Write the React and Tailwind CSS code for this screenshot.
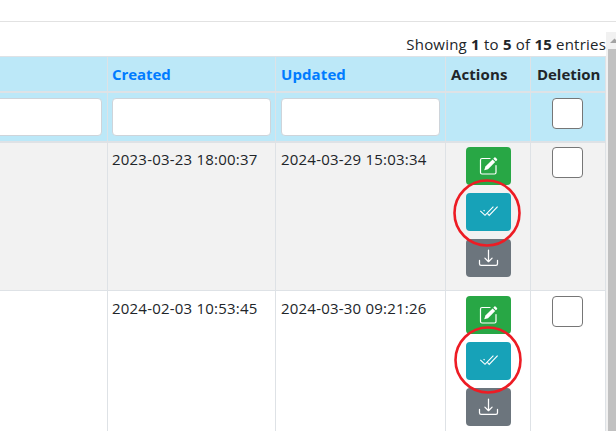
const cols = 'grid grid-cols-[107px_168px_170px_85px_76px]';
const cell = 'border-l border-[#dee2e6]';

function EditIcon() {
  return (
    <svg width="21" height="20" viewBox="0 0 21 20" fill="none">
      <path d="M12 2.5H4A1.5 1.5 0 0 0 2.5 4v12.5A1.5 1.5 0 0 0 4 18h12.5a1.5 1.5 0 0 0 1.5-1.5V9.5" stroke="white" strokeWidth="1.2" strokeLinecap="round" />
      <path d="M6.2 14.3 7.4 10.6 14.6 3.4 17.2 6 10 13.2z" fill="white" />
      <path d="M15.3 2.7 16.4 1.6a.8.8 0 0 1 1.1 0L19 3.1a.8.8 0 0 1 0 1.1L17.9 5.3z" fill="white" />
    </svg>
  );
}

function CheckIcon() {
  return (
    <svg width="21" height="20" viewBox="0 0 21 20" fill="none" stroke="white" strokeWidth="1.15">
      <path d="M2.3 8.9 7 13.3 15.4 4.6" />
      <path d="M5.6 8.2 6.6 9.2M9.4 11.4 11.2 13.3 19.6 4.6" />
    </svg>
  );
}

function DownloadIcon() {
  return (
    <svg width="21" height="20" viewBox="0 0 21 20" fill="none" stroke="white" strokeWidth="1.25" strokeLinecap="round" strokeLinejoin="round">
      <path d="M1.5 12.4v3.4a1.6 1.6 0 0 0 1.6 1.6h14.8a1.6 1.6 0 0 0 1.6-1.6v-3.4" />
      <path d="M10.5 2v11.6M6.9 10.1l3.6 3.6 3.6-3.6" />
    </svg>
  );
}

function Checkbox() {
  return <div className="ml-[21px] h-[31px] w-[31px] rounded-[4px] border border-[#767676] bg-white" />;
}

function Actions({ circle }) {
  const button = 'flex h-[38px] w-[45px] items-center justify-center rounded-[4px]';
  return (
    <div className="relative ml-5 flex w-[45px] flex-col gap-2">
      <div className={`${button} bg-[#28a745]`}>
        <EditIcon />
      </div>
      <div className={`${button} bg-[#17a2b8]`}>
        <CheckIcon />
      </div>
      <div className={`${button} bg-[#6c757d]`}>
        <DownloadIcon />
      </div>
      <svg className={`absolute ${circle}`} width="68" height="68" viewBox="0 0 68 68">
        <circle cx="34" cy="34" r="32.5" fill="none" stroke="#ed1c24" strokeWidth="2.6" />
      </svg>
    </div>
  );
}

export default function App() {
  return (
    <div className="flex h-[431px] w-[616px] flex-col overflow-hidden bg-white font-['Open_Sans','Noto_Sans',sans-serif] text-[15px] leading-6 tracking-[0.21px] text-[#212529]">
      <div className="h-[22px] shrink-0 border-b border-[#e2e2e2]" />
      <div className="flex min-h-0 flex-1">
        <div className="w-[606px] shrink-0">
          <div className="flex h-[34px] justify-end whitespace-pre pt-[10px]">
            <span>Showing <b>1</b> to <b>5</b> of <b>15</b> entries</span>
          </div>
          <div className={`${cols} h-[37px] border-b-2 border-t border-[#dee2e6] bg-[#bce8f8] font-bold tracking-[-0.05px]`}>
            <div />
            <div className={`${cell} pl-1 pt-[5px] text-[#007bff]`}>Created</div>
            <div className={`${cell} pl-[5px] pt-[5px] tracking-[0.1px] text-[#007bff]`}>Updated</div>
            <div className={`${cell} pl-[5px] pt-[5px] tracking-[0.1px]`}>Actions</div>
            <div className={`${cell} border-r pl-[6px] pt-[5px]`}>Deletion</div>
          </div>
          <div className={`${cols} h-[50px] border-b-2 border-[#dee2e6] bg-[#bce8f8]`}>
            <div className="overflow-hidden pt-[5px]">
              <div className="-ml-2 h-[38px] w-[110px] rounded-[4px] border border-[#ced4da] bg-white" />
            </div>
            <div className={`${cell} pl-1 pt-[5px]`}>
              <div className="h-[38px] w-[159px] rounded-[4px] border border-[#ced4da] bg-white" />
            </div>
            <div className={`${cell} pl-[5px] pt-[5px]`}>
              <div className="h-[38px] w-[159px] rounded-[4px] border border-[#ced4da] bg-white" />
            </div>
            <div className={cell} />
            <div className={`${cell} border-r pt-[5px]`}>
              <Checkbox />
            </div>
          </div>
          <div className={`${cols} h-[148px] border-b border-[#dee2e6] bg-[#f2f2f2]`}>
            <div />
            <div className={`${cell} pl-1 pt-1`}>2023-03-23 18:00:37</div>
            <div className={`${cell} pl-[5px] pt-1`}>2024-03-29 15:03:34</div>
            <div className={`${cell} pt-1`}><Actions circle="-left-[13px] top-8" /></div>
            <div className={`${cell} border-r pt-1`}><Checkbox /></div>
          </div>
          <div className={`${cols} h-[140px] bg-white`}>
            <div />
            <div className={`${cell} pl-1 pt-[5px]`}>2024-02-03 10:53:45</div>
            <div className={`${cell} pl-[5px] pt-[5px]`}>2024-03-30 09:21:26</div>
            <div className={`${cell} pt-[5px]`}><Actions circle="-left-3 top-[30px]" /></div>
            <div className={`${cell} border-r pt-[5px]`}><Checkbox /></div>
          </div>
        </div>
        <div className="mt-[10px] w-[10px] overflow-hidden bg-[#f1f1f1]">
          <svg className="block" width="10" height="17" viewBox="0 0 10 17">
            <path d="M4 11 8.5 6.5 13 11z" fill="#a3a3a3" />
          </svg>
          <div className="ml-[2px] h-[390px] bg-[#c1c1c1]" />
        </div>
      </div>
    </div>
  );
}
